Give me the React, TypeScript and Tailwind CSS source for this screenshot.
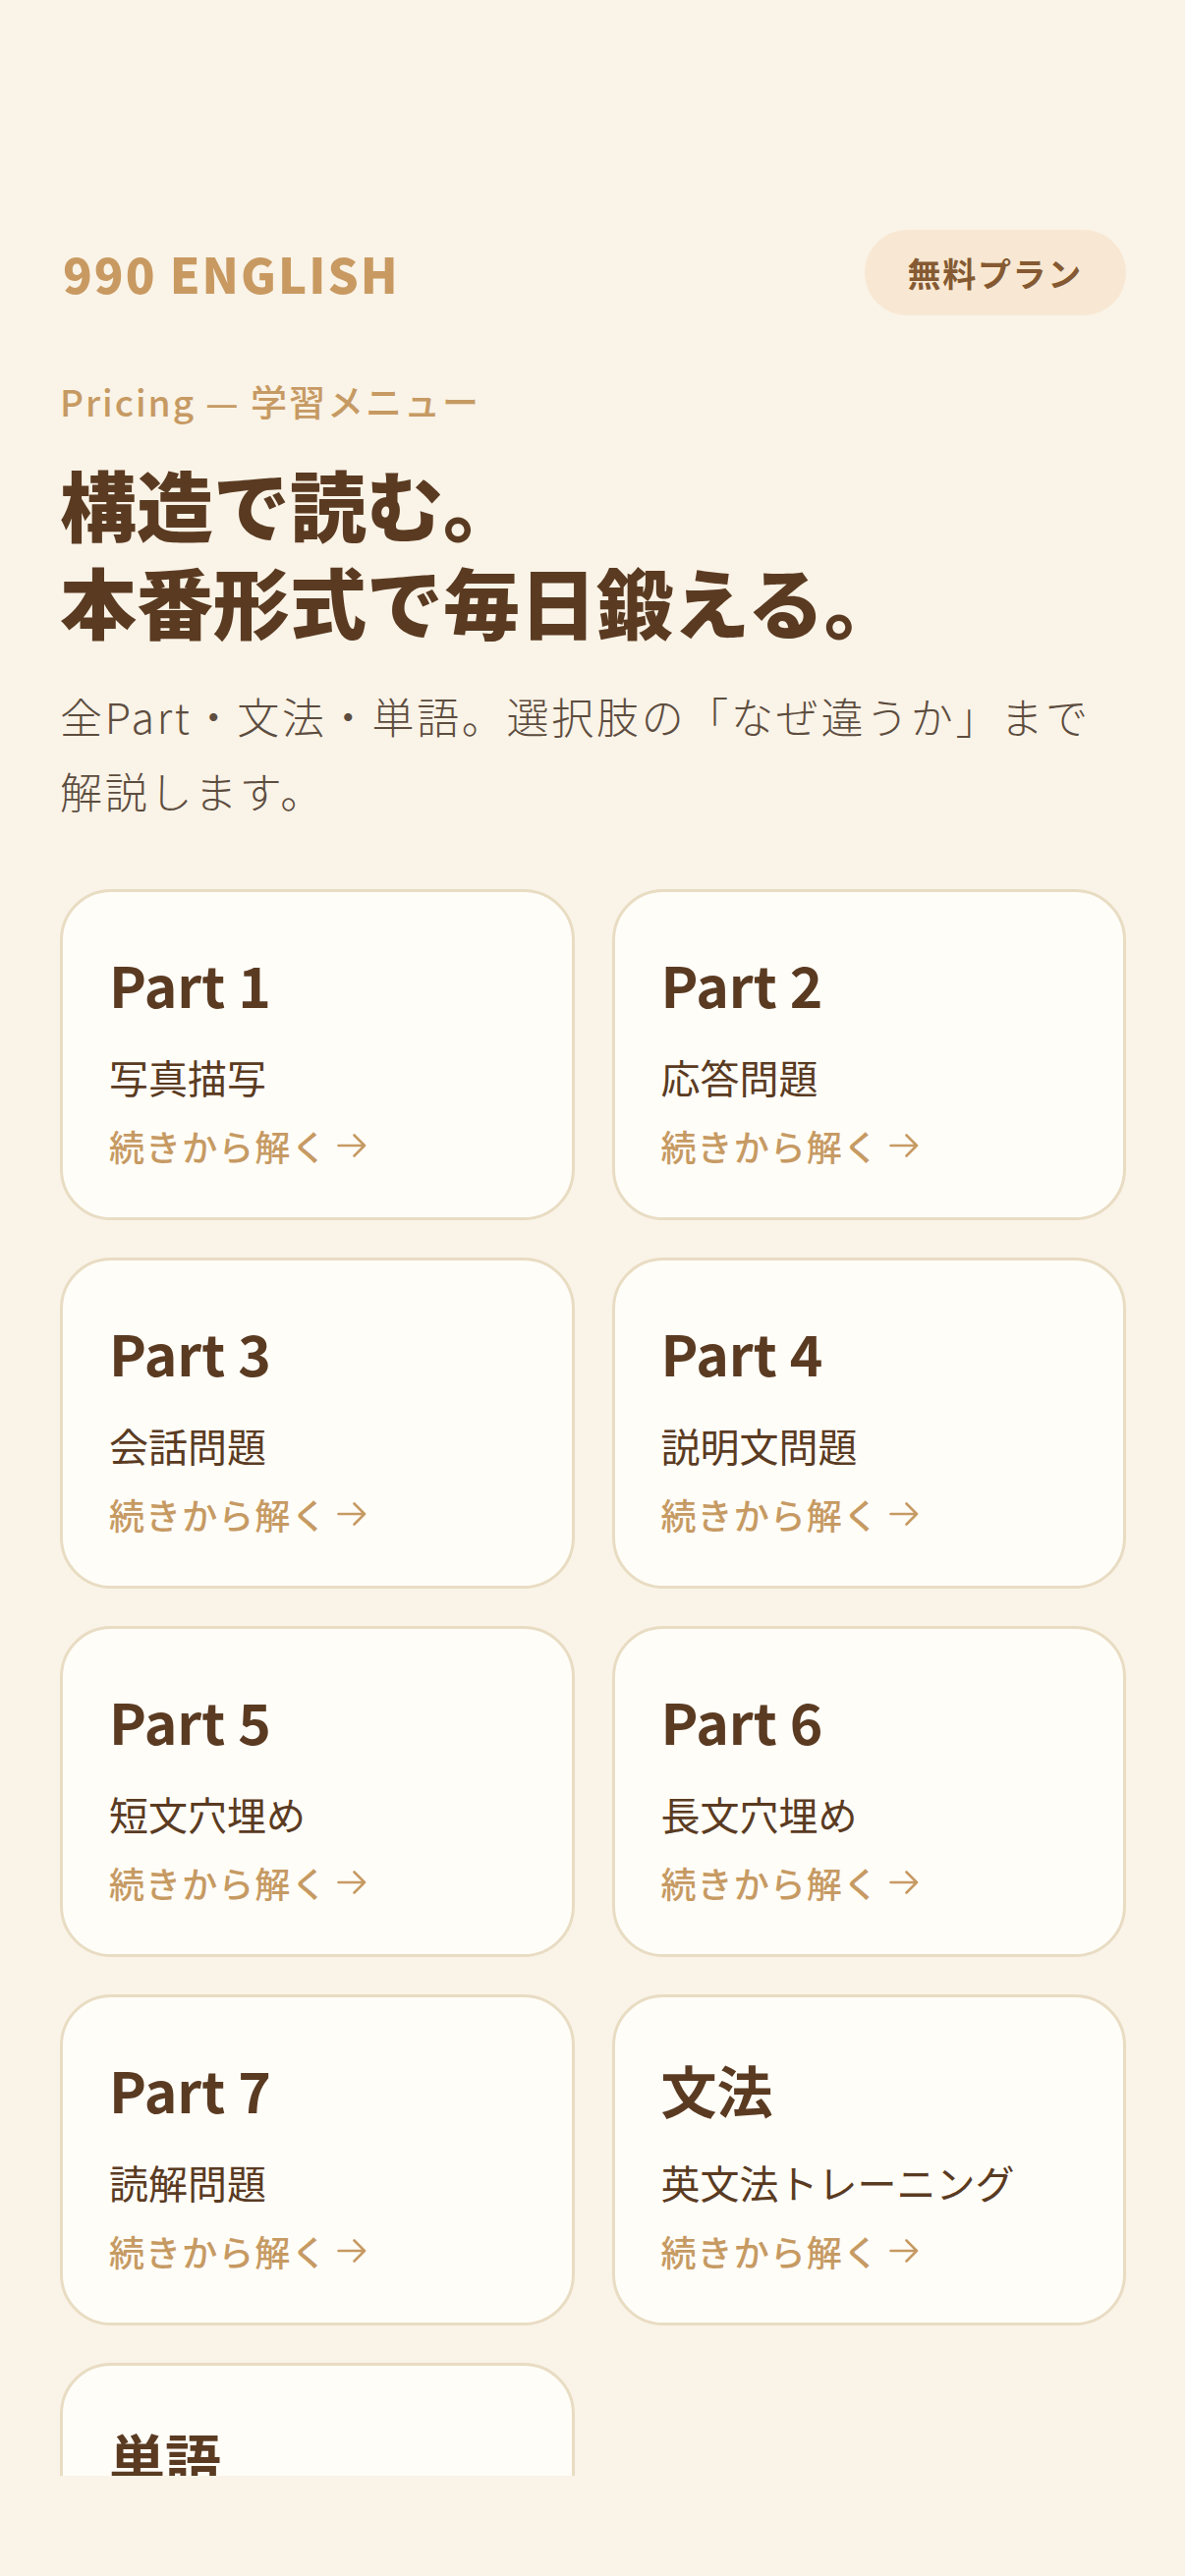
const menuItems = [
  { title: "Part 1", subtitle: "写真描写" },
  { title: "Part 2", subtitle: "応答問題" },
  { title: "Part 3", subtitle: "会話問題" },
  { title: "Part 4", subtitle: "説明文問題" },
  { title: "Part 5", subtitle: "短文穴埋め" },
  { title: "Part 6", subtitle: "長文穴埋め" },
  { title: "Part 7", subtitle: "読解問題" },
  { title: "文法", subtitle: "英文法トレーニング" },
  { title: "単語", subtitle: "頻出単語をチェック" },
];

const ArrowIcon = () => (
  <svg width="30" height="24" viewBox="0 0 30 24" fill="none" className="ml-[10px]">
    <path
      d="M1.5 12H28M17.5 1.5L28 12L17.5 22.5"
      stroke="currentColor"
      strokeWidth="2.6"
      strokeLinecap="round"
      strokeLinejoin="round"
    />
  </svg>
);

const MenuCard = ({ title, subtitle }: { title: string; subtitle: string }) => (
  <div className="flex h-[337px] flex-col rounded-[52px] border-[3px] border-[#e8dcc3] bg-[#fffdf8] px-[47px] pt-[59px]">
    <h2 className="text-[57px] font-bold leading-[1.2] text-[#5a3b22]">{title}</h2>
    <p className="mt-[30px] text-[40px] leading-[1.5] text-[#5a3b22]">{subtitle}</p>
    <span className="mt-[13px] flex items-center text-[36px] font-medium leading-[1.5] tracking-[0.03em] text-[#c69a63]">
      続きから解く
      <ArrowIcon />
    </span>
  </div>
);

export default function App() {
  return (
    <div className="min-h-[2622px] bg-[#faf3e7] font-['Noto_Sans_CJK_JP',sans-serif]">
      <main className="h-[2520px] overflow-hidden pl-[61px] pr-[60px] pt-[234px]">
        <header className="flex items-center justify-between">
          <div className="pl-[3px] text-[49px] font-black leading-none tracking-[2px] text-[#c89a62]">
            990 ENGLISH
          </div>
          <div className="flex h-[87px] items-center rounded-full bg-[#f8e8d3] px-[44px] text-[34px] font-bold tracking-[0.05em] text-[#855a33]">
            無料プラン
          </div>
        </header>

        <p className="mt-[60px] text-[37px] font-medium leading-[1.5] tracking-[2px] text-[#c69a63]">
          Pricing — 学習メニュー
        </p>
        <h1 className="mt-[26px] text-[78px] font-black leading-[1.28] text-[#5a3b22]">
          構造で読む。
          <br />
          本番形式で毎日鍛える。
        </h1>
        <p className="mt-[28px] text-[43px] font-light leading-[76px] tracking-[2.7px] text-[#5d4d3f]">
          全Part・文法・単語。選択肢の「なぜ違うか」まで解説します。
        </p>

        <section className="mt-[63px] grid grid-cols-2 gap-x-[38px] gap-y-[38px]">
          {menuItems.map((item) => (
            <MenuCard key={item.title} title={item.title} subtitle={item.subtitle} />
          ))}
        </section>
      </main>
    </div>
  );
}
